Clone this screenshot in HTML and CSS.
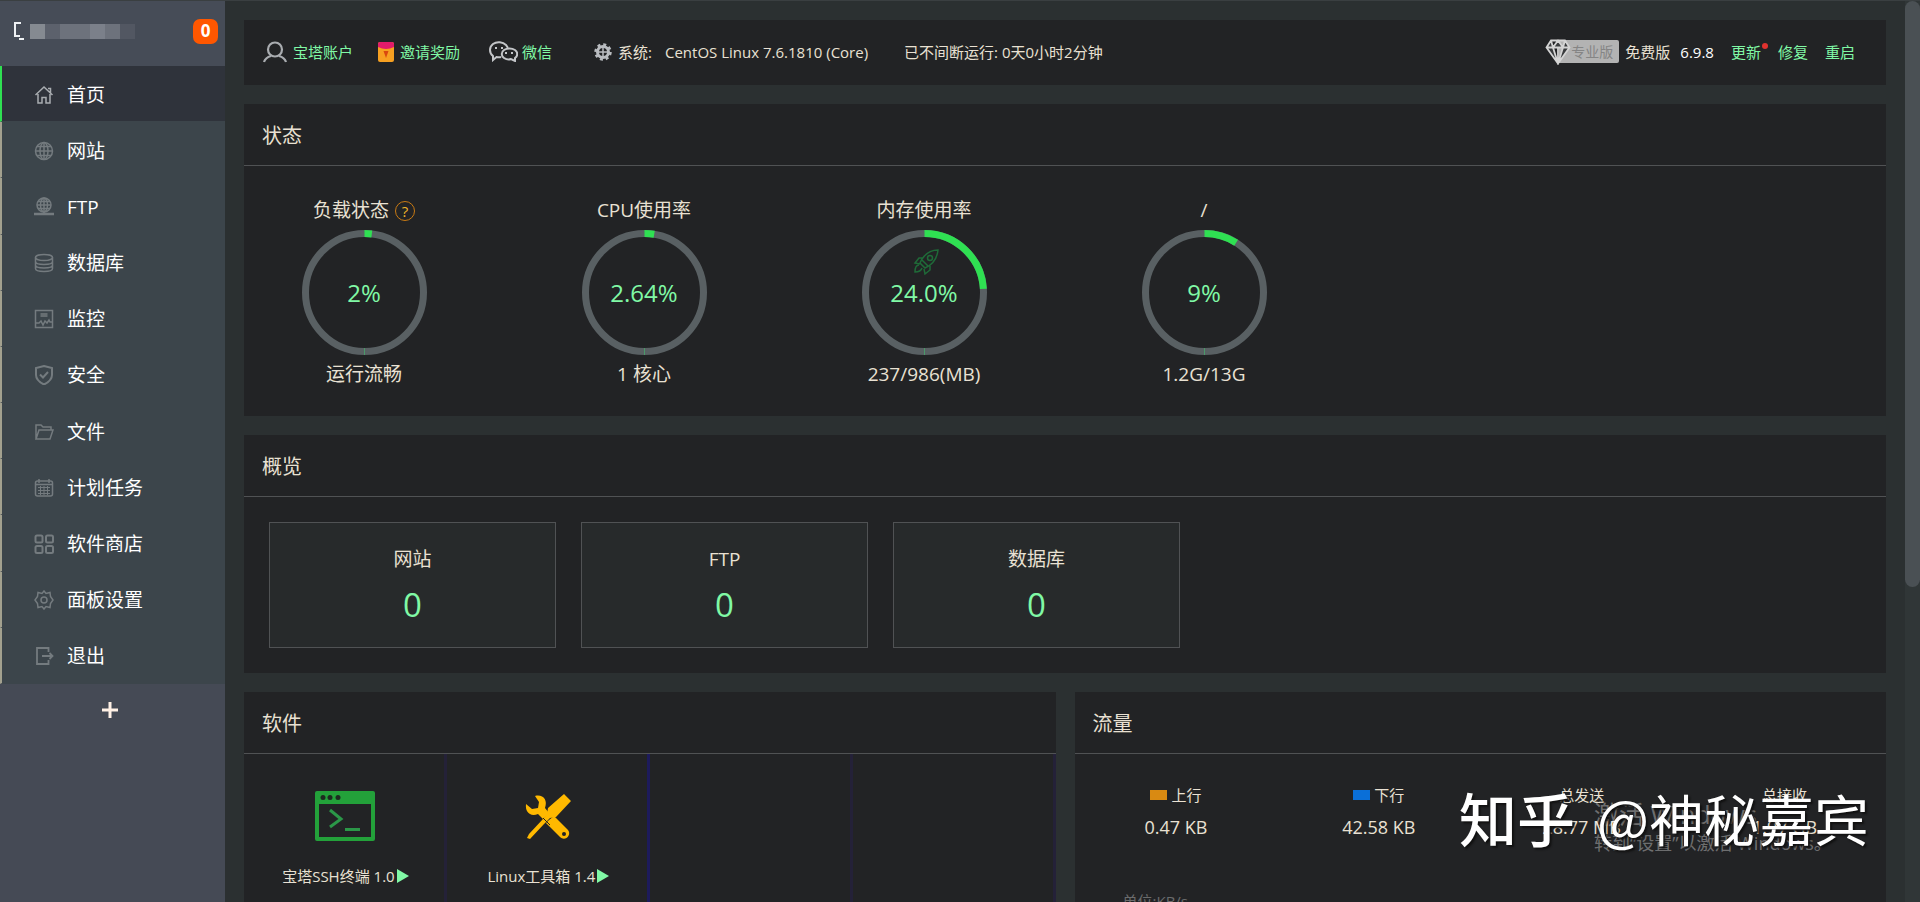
FILE: index.html
```html
<!DOCTYPE html>
<html lang="zh-CN">
<head>
<meta charset="utf-8">
<title>首页</title>
<link rel="stylesheet" href="styles.css">
</head>
<body>
<div class="app">
  <aside class="sidebar">
    <div class="host">
      <svg class="host-icon" width="12" height="20" viewBox="0 0 12 20" fill="none" stroke="#eef1f4" stroke-width="2"><path d="M8 2H2v13h5M6 18h5"/></svg>
      <div class="mosaic"><i></i><i></i><i></i><i></i><i></i><i></i><i></i></div>
      <span class="badge">0</span>
    </div>
    <nav class="nav">
      <a href="#" class="active"><svg viewBox="0 0 20 20"><path d="M1.500 10 10 2l8.500 8M14 3.500h2.500V8M4 9v9h4v-5.500h4V18h4V9"/></svg>首页</a>
      <a href="#"><svg viewBox="0 0 20 20"><circle cx="10" cy="10" r="8.500"/><ellipse cx="10" cy="10" rx="4" ry="8.500"/><path d="M10 1.500v17M1.500 10h17M3 5.500h14M3 14.500h14"/></svg>网站</a>
      <a href="#"><svg viewBox="0 0 20 20"><circle cx="10" cy="8" r="7"/><ellipse cx="10" cy="8" rx="3.500" ry="7"/><path d="M10 1v17M3 8h14M4 4.500h12M4 11.500h12"/><path d="M0 17h20M7 17h6" stroke-width="2.500"/></svg>FTP</a>
      <a href="#"><svg viewBox="0 0 20 20"><ellipse cx="10" cy="4.500" rx="8.500" ry="3"/><path d="M1.500 4.500v11c0 4 17 4 17 0v-11M1.500 8.500c0 4 17 4 17 0M1.500 12c0 4 17 4 17 0"/></svg>数据库</a>
      <a href="#"><svg viewBox="0 0 20 20"><path d="M1.500 1.500h17v17h-17zM2 14h3l2-2 2 4 2-4 2 2 2-3 1 2h2M6.500 5h7M6.500 7h7"/></svg>监控</a>
      <a href="#"><svg viewBox="0 0 20 20"><path stroke-width="2" d="M10 1 18 3v7c0 4-3 7-8 9.500C5 17 2 14 2 10V3zM6 9.500l3 3 5-5.500"/></svg>安全</a>
      <a href="#"><svg viewBox="0 0 20 20"><path d="M2 17V3h5l2 2h8v3M2 17l3-9h14l-3 9z"/></svg>文件</a>
      <a href="#"><svg viewBox="0 0 20 20"><rect x="1.500" y="3" width="17" height="15" rx="2"/><path d="M2 6.500h16M5 1v4M15 1v4"/><path stroke-width="1" d="M4 9.500h12M4 12.500h12M4 15.500h12M6.500 8v9M10 8v9M13.500 8v9"/></svg>计划任务</a>
      <a href="#"><svg viewBox="0 0 20 20"><g stroke-width="2"><rect x="1.500" y="1.500" width="7" height="7" rx="1.500"/><rect x="12" y="1.500" width="7" height="7" rx="1.500"/><rect x="1.500" y="12" width="7" height="7" rx="1.500"/><rect x="12" y="12" width="7" height="7" rx="1.500"/></g></svg>软件商店</a>
      <a href="#"><svg viewBox="0 0 20 20"><path d="m10 1 2 2.500 4-1 .500 4L19 10l-2.500 3.500-.500 4-4-1L10 19l-2-2.500-4 1-.500-4L1 10l2.500-3.500.500-4 4 1z"/><circle cx="10" cy="10" r="3"/></svg>面板设置</a>
      <a href="#"><svg viewBox="0 0 20 20"><path stroke-width="1.800" d="M14.500 6V2H3v16h11.500v-4M8 10h10M15.500 7l3 3-3 3"/></svg>退出</a>
    </nav>
    <button class="add" aria-label="添加"><svg width="16" height="16" viewBox="0 0 16 16" stroke="#fff1e6" stroke-width="3"><path d="M8 0v16M0 8h16"/></svg></button>
  </aside>

  <main class="main">
    <header class="card topbar">
      <a class="tool account" href="#"><svg width="24" height="22" viewBox="0 0 24 22" fill="none" stroke="#a9acb0" stroke-width="2.200"><circle cx="12" cy="8.500" r="7"/><path d="M1 21c1-3 3-5 7-6M23 21c-1-3-3-5-7-6"/></svg>宝塔账户</a>
      <a class="tool invite" href="#"><svg width="16" height="20" viewBox="0 0 16 20"><rect width="16" height="20" rx="2" fill="#f7a021"/><path d="M0 5V2q0-2 2-2h12q2 0 2 2v3q-8 4-16 0z" fill="#e21b6b"/><path d="M5.500 9h5L8 16z" fill="#d9480f"/></svg>邀请奖励</a>
      <a class="tool wechat" href="#"><svg width="29" height="21" viewBox="0 0 29 21" fill="none" stroke="#c3c5c8" stroke-width="2"><path d="M12 16c-1.500.500-3 .400-4.500 0L4 19v-4C0 12 0 6 4 3s10-2 13 1l2 3"/><path d="M26 17c3-2 3-6 0-8s-8-2-11 0-3 6 0 8 5 2 7 1l4 2z"/><path d="M6 7h2M12 7h2M16 12h2M22 12h2"/></svg>微信</a>
      <span class="system"><svg width="18" height="18" viewBox="0 0 18 18" fill="none" stroke="#b9bcc0"><circle cx="9" cy="9" r="5.500" stroke-width="3"/><circle cx="9" cy="9" r="7.500" stroke-width="2.500" stroke-dasharray="3 2.890"/><path d="M9 3v12M3 9h12" stroke-width="1.500"/></svg>系统:</span>
      <span class="os">CentOS Linux 7.6.1810 (Core)</span>
      <span class="uptime">已不间断运行: 0天0小时2分钟</span>
      <div class="version">
        <span class="pro"><svg width="26" height="26" viewBox="0 0 26 26" fill="#3a3c3e" stroke="#d4d4d4" stroke-width="1.800"><path d="M6 1.500h14l4.500 7L13 24.500 1.500 8.500zM1.500 8.500h23M8 8.500l5 16 5-16M6 1.500l2 7 5-7 5 7 2-7M13 8v16"/></svg>专业版</span>
        <span class="free">免费版</span>
        <span class="number">6.9.8</span>
        <a class="update" href="#">更新</a>
        <a class="repair" href="#">修复</a>
        <a href="#">重启</a>
      </div>
    </header>

    <section class="card">
      <h2>状态</h2>
      <div class="gauges">
        <div class="gauge">
          <div class="name">负载状态<span class="help">?</span></div>
          <div class="ring"><svg viewBox="0 0 125 125"><circle class="track" cx="62.500" cy="62.500" r="59"/><circle class="value" cx="62.500" cy="62.500" r="59" pathLength="100" stroke-dasharray="2 98"/><path d="M62.500 118v7"/></svg><b>2%</b></div>
          <div>运行流畅</div>
        </div>
        <div class="gauge">
          <div class="name">CPU使用率</div>
          <div class="ring"><svg viewBox="0 0 125 125"><circle class="track" cx="62.500" cy="62.500" r="59"/><circle class="value" cx="62.500" cy="62.500" r="59" pathLength="100" stroke-dasharray="2.640 97.360"/><path d="M62.500 118v7"/></svg><b>2.64%</b></div>
          <div>1 核心</div>
        </div>
        <div class="gauge">
          <div class="name">内存使用率</div>
          <div class="ring"><svg viewBox="0 0 125 125"><circle class="track" cx="62.500" cy="62.500" r="59"/><circle class="value" cx="62.500" cy="62.500" r="59" pathLength="100" stroke-dasharray="24 76"/><path d="M62.500 118v7"/><g class="rocket"><path d="M76 20c-7 0-12 3-16 9l-2 4 5 5c7-3 12-9 13-18zM61 28h-4l-4 5 5 1M68 36v4l-5 4-1-5"/><circle cx="68" cy="28" r="2.500"/><path d="M57 35c-3 0-4 3-4 7 4 0 6-1 7-4M60 30l6 6"/></g></svg><b>24.0%</b></div>
          <div>237/986(MB)</div>
        </div>
        <div class="gauge">
          <div class="name">/</div>
          <div class="ring"><svg viewBox="0 0 125 125"><circle class="track" cx="62.500" cy="62.500" r="59"/><circle class="value" cx="62.500" cy="62.500" r="59" pathLength="100" stroke-dasharray="9 91"/><path d="M62.500 118v7"/></svg><b>9%</b></div>
          <div>1.2G/13G</div>
        </div>
      </div>
    </section>

    <section class="card">
      <h2>概览</h2>
      <div class="overview">
        <div class="count"><span>网站</span><a href="#">0</a></div>
        <div class="count"><span>FTP</span><a href="#">0</a></div>
        <div class="count"><span>数据库</span><a href="#">0</a></div>
      </div>
    </section>

    <div class="columns">
      <section class="card">
        <h2>软件</h2>
        <div class="software">
          <div class="slot">
            <svg width="60" height="60" viewBox="0 0 60 60"><path fill="#23a13a" fill-rule="evenodd" d="M2 5h56q2 0 2 2v46q0 2-2 2H2q-2 0-2-2V7q0-2 2-2zm2 13v33h52V18z"/><g fill="#1d2b20"><circle cx="8" cy="11.500" r="2.500"/><circle cx="15" cy="11.500" r="2.500"/><circle cx="23" cy="11.500" r="2.500"/></g><path d="m15 24 11 9-11 8M30 43.500h15" fill="none" stroke="#2b9748" stroke-width="3"/></svg>
            <div class="label">宝塔SSH终端 1.0<i class="play"></i></div>
          </div>
          <div class="slot">
            <svg width="60" height="60" viewBox="0 0 60 60"><g fill="#ffb900"><path d="M17 10c8-2 13 4 10 12l4 5-6 6-5-5C12 31 7 26 8 18l6 5 6-1 1-6z"/><path d="m31 34 5-4 14 14c4 5-3 12-8 7L28 37z"/><path d="m46 8 7 7-15 16-6 1-6 6-14 15-3-1 2-4 14-15 4-5 1-6z"/></g><circle cx="46" cy="48" r="2" fill="#222325"/><path d="m25 32 7 7" stroke="#222325"/></svg>
            <div class="label">Linux工具箱 1.4<i class="play"></i></div>
          </div>
          <div class="slot"></div>
          <div class="slot"></div>
        </div>
      </section>
      <section class="card">
        <h2>流量</h2>
        <div class="traffic">
          <div><span class="key"><i class="up"></i>上行</span><strong>0.47 KB</strong></div>
          <div><span class="key"><i class="down"></i>下行</span><strong>42.58 KB</strong></div>
          <div><span class="key">总发送</span><strong>28.77 MB</strong></div>
          <div><span class="key">总接收</span><strong>1.97 GB</strong></div>
        </div>
        <div class="unit">单位:KB/s</div>
      </section>
    </div>
  </main>
  <div class="scroll"><div class="thumb"></div></div>

  <div class="activate"><p>激活 Windows</p><small>转到“设置”以激活 Windows。</small></div>
  <div class="watermark"><b>知乎</b><span>@神秘嘉宾</span></div>
</div>
</body>
</html>
```
FILE: styles.css
```css
* { box-sizing: border-box; }
body {
  margin: 0;
  background: #2b3031;
  color: #e9e1d3;
  font: 15px/24px "Open Sans", "Noto Sans CJK SC", sans-serif;
}
a { color: #80f9a5; text-decoration: none; }
h2, p { margin: 0; font-weight: 400; }
svg { flex: none; }

.app {
  position: relative;
  display: flex;
  height: 100vh;
  overflow: hidden;
  border-top: 1px solid #3a3f41;
}

.sidebar { flex: none; width: 225px; background: #454a55; }
.host {
  display: flex;
  align-items: center;
  height: 65px;
  padding: 0 7px 5px 13px;
  background: #464c57;
}
.mosaic { display: flex; margin-left: 5px; }
.mosaic i { width: 15px; height: 15px; background: #6d727c; }
.mosaic i:nth-child(1) { background: #858a91; }
.mosaic i:nth-child(2) { background: #5c616c; }
.mosaic i:nth-child(5) { background: #7b808a; }
.mosaic i:nth-child(7) { background: #525762; }
.badge {
  width: 25px;
  height: 25px;
  margin-left: auto;
  border-radius: 7px;
  background: #ff5700;
  color: #fff;
  font-size: 17px;
  font-weight: 700;
  text-align: center;
}
.nav { display: grid; grid-auto-rows: 1fr; min-height: 618px; background: #3c454b; }
.nav a {
  display: flex;
  align-items: center;
  gap: 13px;
  padding: 2px 0 0 32px;
  border-left: 2px solid #a3a18f;
  border-bottom: 1px solid #3c454b;
  color: #fff;
  font-size: 19px;
}
.nav .active { background: #2f333b; border-left-color: #2fe052; }
.nav svg { width: 20px; height: 20px; fill: none; stroke: #747b7f; stroke-width: 1.5; }
.nav .active svg { stroke: #a9adb1; }
.add {
  display: flex;
  justify-content: center;
  align-items: center;
  width: 100%;
  height: 52px;
  padding: 0 5px 0 0;
  border: 0;
  background: none;
}

.main {
  flex: 1;
  min-width: 0;
  display: flex;
  flex-direction: column;
  gap: 19px;
  padding: 19px 19px 0;
}
.card { flex: none; background: #222325; }
.card h2 {
  height: 62px;
  padding: 0 18px;
  border-bottom: 1px solid #505254;
  font-size: 20px;
  line-height: 64px;
}

.topbar { display: flex; align-items: center; height: 65px; padding: 0 31px 2px 19px; white-space: nowrap; }
.tool, .system, .version { display: flex; align-items: center; gap: 6px; }
.tool { margin-right: 25px; }
.invite { margin-right: 29px; }
.wechat { margin-right: 42px; gap: 4px; }
.os { margin: 0 36px 0 13px; }
.version { margin-left: auto; gap: 17px; }
.pro {
  display: flex;
  align-items: center;
  width: 74px;
  height: 23px;
  border-radius: 2px;
  background: linear-gradient(90deg, transparent 14px, #b3b3b3 14px);
  color: #858585;
  font-size: 14px;
}
.pro + .free { margin: 0 -7px 0 -11px; }
.number { color: #fff; }
.update { position: relative; }
.update::after {
  content: "";
  position: absolute;
  top: 3px;
  right: -7px;
  width: 6px;
  height: 6px;
  border-radius: 50%;
  background: #e0322f;
}

.gauges { display: flex; gap: 40px; padding: 31px 0 28px; }
.gauge {
  display: flex;
  flex-direction: column;
  align-items: center;
  gap: 6px;
  width: 240px;
  font-size: 19px;
  line-height: 27px;
}
.name { display: flex; align-items: center; gap: 6px; }
.help {
  width: 20px;
  height: 20px;
  border: 1px solid #c87a14;
  border-radius: 50%;
  color: #f0b429;
  font-size: 15px;
  line-height: 18px;
  text-align: center;
}
.ring { display: grid; place-items: center; width: 125px; height: 125px; }
.ring > * { grid-area: 1 / 1; }
.ring svg { width: 100%; fill: none; stroke: #4a9968; }
.ring circle { stroke-width: 7; }
.ring .track { stroke: #596063; }
.ring .value { stroke: #2fe052; transform: rotate(-90deg); transform-origin: center; }
.ring .rocket, .ring .rocket circle { stroke: #1f6a38; stroke-width: 1.5; }
.ring b { color: #80f9a5; font-size: 24px; font-weight: 400; }

.overview { display: flex; gap: 25px; padding: 25px; }
.count {
  display: flex;
  flex-direction: column;
  align-items: center;
  gap: 10px;
  width: 287px;
  padding: 24px 0 18px;
  border: 1px solid #505254;
  background: #272a2b;
  font-size: 19px;
}
.count a { font-size: 33px; line-height: 48px; }

.columns { display: grid; grid-template-columns: 1fr 1fr; gap: 19px; }
.software { display: grid; grid-template-columns: repeat(4, 1fr); }
.slot {
  display: flex;
  flex-direction: column;
  align-items: center;
  gap: 18px;
  min-height: 200px;
  padding: 32px 0 0 3px;
  border-right: 3px solid #242138;
}
.slot:nth-child(2) { border-right-color: #1d1b5c; }
.label { display: flex; align-items: center; gap: 2px; white-space: nowrap; }
.play {
  border-left: 12px solid #80f9a5;
  border-top: 7px solid transparent;
  border-bottom: 7px solid transparent;
}

.traffic { display: grid; grid-template-columns: repeat(4, 1fr); padding-top: 29px; }
.traffic div { display: flex; flex-direction: column; align-items: center; gap: 8px; }
.traffic strong { font-size: 18px; font-weight: 400; }
.key { display: flex; align-items: center; gap: 4px; }
.key i { width: 17px; height: 10px; background: #d98a12; }
.key .down { background: #0a6fd8; }
.unit { padding: 50px 0 0 48px; color: #6a6b6c; }

.scroll { flex: none; width: 15px; height: 100%; background: #303637; }
.thumb { height: 65%; border-radius: 8px; background: #4a5054; }

.activate { position: absolute; left: 1594px; bottom: 46px; color: rgba(255, 255, 255, .36); white-space: nowrap; }
.activate p { font-size: 25px; line-height: 32px; }
.activate small { display: block; font-size: 18px; line-height: 26px; }
.watermark {
  position: absolute;
  right: 51px;
  bottom: 50px;
  display: flex;
  gap: 22px;
  color: #fff;
  font: 55px/70px "Noto Sans CJK SC", sans-serif;
  text-shadow: 2px 2px 2px #111;
  white-space: nowrap;
}
.watermark b { font-size: 58px; font-weight: 500; }
```
